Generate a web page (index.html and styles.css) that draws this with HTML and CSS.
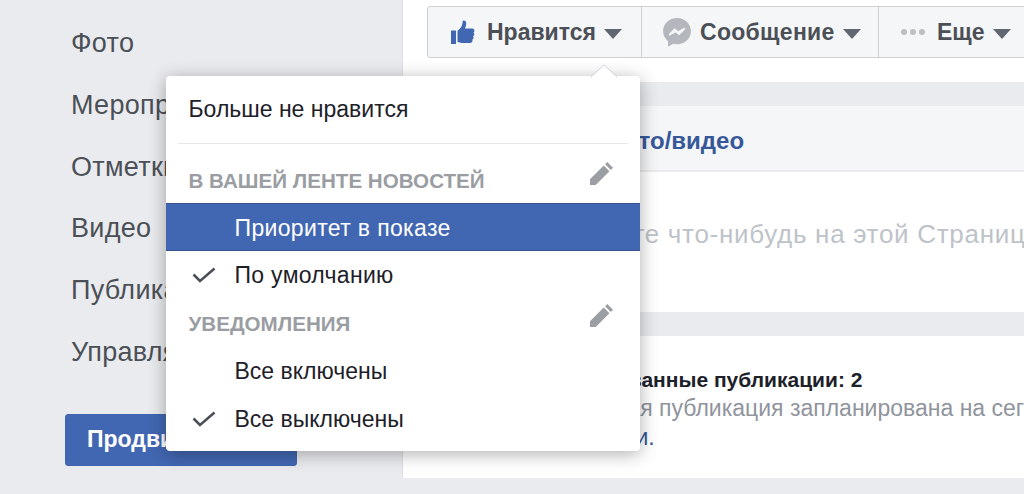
FILE: index.html
```html
<!DOCTYPE html>
<html lang="ru">
<head>
<meta charset="utf-8">
<title>Страница</title>
<link rel="stylesheet" href="styles.css">
</head>
<body>
<div class="page">
  <nav class="sidebar">
    <ul class="side-list">
      <li>Фото</li>
      <li>Мероприятия</li>
      <li>Отметки</li>
      <li>Видео</li>
      <li>Публикации</li>
      <li>Управлять</li>
    </ul>
    <button class="promote">Продвигать</button>
  </nav>
  <main class="main">
    <section class="top">
      <div class="btn-group">
        <div class="btn btn-like">
          <svg class="ico-thumb" viewBox="0 0 24 24"><path fill="#4267b2" d="M0 10.500h5V24H0zM6.500 10.800c2.600-1.600 4.300-4.200 4.900-7.200.2-1.200.2-2.300.8-3 1.600-.6 3 .7 3 2.800 0 1.800-.6 3.600-1.300 5.200h7.300c1.500 0 2.300 1.200 2.200 2.300-.1.800-.5 1.300-1 1.700.7.500 1 1.200.9 2-.1.800-.6 1.400-1.200 1.700.4.500.6 1.200.4 1.900-.2.700-.7 1.200-1.300 1.500.3.500.4 1.100.2 1.600-.3 1-1.100 1.600-2.300 1.600H11c-1.800 0-3.200-.5-4.500-1.200z"/></svg>
          <span>Нравится</span><i class="caret"></i>
        </div>
        <div class="btn btn-msg">
          <svg class="ico-msg" viewBox="0 0 24 25"><path fill="#b4b7bd" d="M12 0C5.400 0 0 5 0 11.300c0 3.500 1.700 6.600 4.300 8.700v4.800l4.400-2.500c1 .3 2.200.4 3.300.4 6.600 0 12-5 12-11.300S18.600 0 12 0z"/><path fill="none" stroke="#f5f6f7" stroke-width="1.700" stroke-linejoin="round" d="M5.800 14.200l4.200-4.300 2.800 2.500 5.400-3-4.400 4.500-2.800-2.500z"/></svg>
          <span class="msg-label">Сообщение</span><i class="caret"></i>
        </div>
        <div class="btn btn-more">
          <span class="dots"><b></b><b></b><b></b></span>
          <span>Еще</span><i class="caret"></i>
        </div>
      </div>
    </section>
    <div class="gap gap-a"></div>
    <section class="composer">
      <div class="tabs"><a class="tab-link">Фото/видео</a></div>
      <div class="compose-body">Напишите что-нибудь на этой Странице</div>
    </section>
    <div class="gap gap-b"></div>
    <section class="sched">
      <h3>Запланированные публикации: 2</h3>
      <p>Следующая публикация запланирована на сегодня</p>
      <a class="more-link">Подробности.</a>
    </section>
  </main>
</div>

<div class="menu">
  <svg class="menu-arrow" viewBox="0 0 26 13"><path fill="#fff" stroke="#ccd0d5" d="M0 13L13 .7 26 13"/></svg>
  <div class="m-item m-first">Больше не нравится</div>
  <hr class="m-div">
  <div class="m-head m-head-one"><span>В ВАШЕЙ ЛЕНТЕ НОВОСТЕЙ</span>
    <svg class="ico-pen" viewBox="0 0 24 24"><path fill="#9b9ea3" d="M18 0l6 6-2.300 2.300-6-6zM14.300 3.700l6 6L6 24H0v-6z"/></svg>
  </div>
  <div class="m-item m-sel">Приоритет в показе</div>
  <div class="m-item m-check m-wide">
    <svg class="ico-check" viewBox="0 0 24 16"><path fill="none" stroke="#4b4f56" stroke-width="2.500" d="M1.500 7.500l6.500 6.500L22.500 1.500"/></svg>
    По умолчанию
  </div>
  <div class="m-head m-head-two"><span>УВЕДОМЛЕНИЯ</span>
    <svg class="ico-pen" viewBox="0 0 24 24"><path fill="#9b9ea3" d="M18 0l6 6-2.300 2.300-6-6zM14.300 3.700l6 6L6 24H0v-6z"/></svg>
  </div>
  <div class="m-item m-plain">Все включены</div>
  <div class="m-item m-check">
    <svg class="ico-check" viewBox="0 0 24 16"><path fill="none" stroke="#4b4f56" stroke-width="2.500" d="M1.500 7.500l6.500 6.500L22.500 1.500"/></svg>
    Все выключены
  </div>
</div>
</body>
</html>
```
FILE: styles.css
```css
* { box-sizing: border-box; }
html, body { margin: 0; height: 100%; overflow: hidden; }
body {
  background: #e9ebee;
  font-family: "Liberation Sans", Arial, sans-serif;
  color: #1d2129;
}
.page { display: flex; height: 478px; }

/* sidebar */
.sidebar { width: 402px; flex: none; padding: 12px 0 0 65px; }
.side-list { list-style: none; margin: 0; padding: 0 0 0 6px; font-size: 27px; letter-spacing: .3px; color: #4b4f56; }
.side-list li { height: 61.800px; line-height: 62px; white-space: nowrap; }
.promote {
  display: block; width: 232px; height: 52px; margin-top: 31px;
  padding: 0 0 0 21px; text-align: left;
  background: #4267b2; color: #fff; border: 1px solid #4064ae; border-radius: 3px;
  font: bold 23px "Liberation Sans", Arial, sans-serif;
}

/* main column */
.main { flex: 1; min-width: 0; background: #fff; overflow: hidden; border-left: 1px solid #dddfe2; }
.top { height: 82px; padding: 6px 0 0 24px; }
.btn-group {
  display: flex; width: 640px; height: 52px;
  background: #f5f6f7; border: 1px solid #ced0d4; border-radius: 3px;
}
.btn {
  display: flex; align-items: center; flex: none;
  font-size: 23px; font-weight: bold; color: #4b4f56;
  border-right: 1px solid #ced0d4;
}
.btn-like { width: 214px; padding-left: 23px; }
.btn-msg { width: 237px; padding-left: 21px; }
.btn-more { border-right: 0; padding-left: 22px; }
.msg-label { letter-spacing: .3px; }
.caret {
  width: 0; height: 0; margin-left: 8px; margin-top: 3px;
  border: 9px solid transparent; border-top: 10px solid #606770; border-bottom: 0;
}
.ico-thumb { width: 24px; height: 24px; margin-right: 12px; }
.ico-msg { width: 28px; height: 29px; margin-right: 9px; }
.dots { display: flex; gap: 3px; margin-right: 12px; }
.dots b { width: 6px; height: 6px; border-radius: 50%; background: #bcc0c6; }

.gap { background: #e9ebee; height: 24px; }
.composer { background: #fff; }
.tabs {
  height: 66px; background: #f5f6f7; border-bottom: 2px solid #e9ebee;
  padding: 21px 0 0 201px;
}
.tab-link { font-size: 24px; font-weight: bold; color: #365899; }
.compose-body {
  height: 140px; padding: 47px 0 0 128px;
  font-size: 26px; letter-spacing: .7px; color: #bec3c9; white-space: nowrap;
}
.sched { height: 141px; padding: 30px 0 0 112px; background: #fff; white-space: nowrap; }
.sched h3 { margin: 0; font-size: 21px; line-height: 28px; color: #1d2129; }
.sched p { margin: 0; padding-left: 9px; font-size: 23px; line-height: 29px; color: #90949c; }
.more-link { display: block; margin-left: -8px; font-size: 23px; line-height: 29px; color: #365899; }

/* drop-down menu */
.menu {
  position: absolute; left: 166px; top: 76px; width: 474px; height: 375px;
  background: #fff; border-radius: 4px;
  box-shadow: 0 3px 18px rgba(0,0,0,.32);
  font-size: 23px; color: #1d2129;
}
.menu-arrow { position: absolute; left: 425px; top: -12px; width: 26px; height: 13px; }
.m-item { height: 48px; line-height: 48px; padding-left: 68.500px; white-space: nowrap; position: relative; }
.m-first { padding-left: 22.500px; height: 67px; line-height: 67px; }
.m-div { margin: 0 12px; border: 0; border-top: 1px solid #e5e6e9; }
.m-head {
  display: flex; justify-content: space-between;
  padding: 0 27px 0 22.500px;
  font-size: 20.600px; font-weight: bold; color: #9a9da2; white-space: nowrap;
}
.m-head-one { height: 59px; padding-top: 25px; }
.m-head-two { height: 47px; padding-top: 13px; }
.m-head-two .ico-pen { margin-top: -8px; }
.m-sel {
  background: #4267b2; color: #fff; letter-spacing: .35px;
  border-top: 1px solid #35528e; border-bottom: 1px solid #35528e;
}
.m-wide { letter-spacing: .3px; }
.m-plain { margin-top: 1px; }
.ico-pen { width: 23px; height: 23px; margin-top: -7px; }
.ico-check { position: absolute; left: 26px; top: 16px; width: 24px; height: 16px; }
```
